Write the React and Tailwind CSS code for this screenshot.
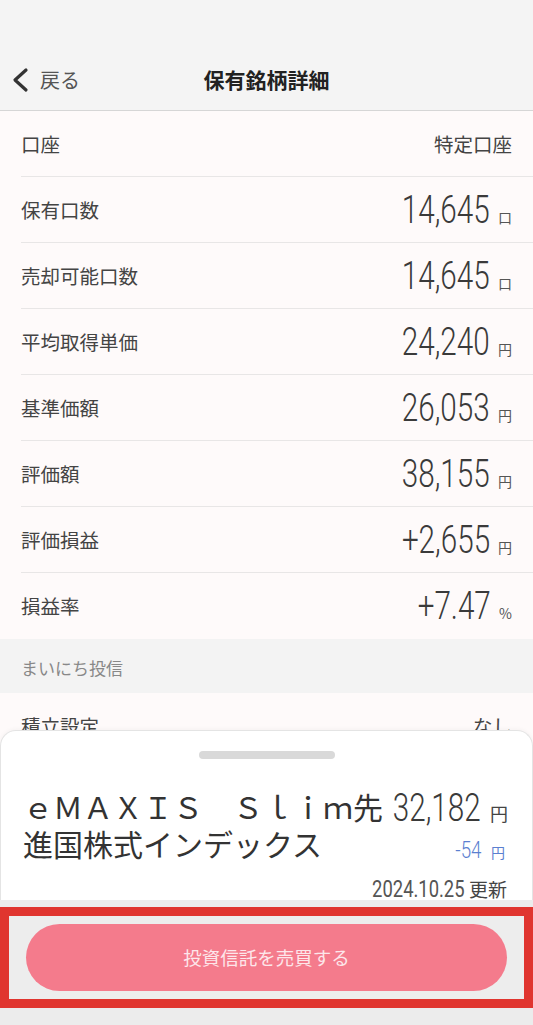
import React from "react";

const jp = { fontFamily: '"Noto Sans CJK JP", "Noto Sans", sans-serif' };
const num = { fontFamily: 'Roboto, "Noto Sans", sans-serif' };

const rows = [
  { label: "口座", text: "特定口座" },
  { label: "保有口数", value: "14,645", unit: "口" },
  { label: "売却可能口数", value: "14,645", unit: "口" },
  { label: "平均取得単価", value: "24,240", unit: "円" },
  { label: "基準価額", value: "26,053", unit: "円" },
  { label: "評価額", value: "38,155", unit: "円" },
  { label: "評価損益", value: "+2,655", unit: "円" },
  { label: "損益率", value: "+7.47", unit: "%", last: true },
];

function Row({ label, text, value, unit, last }) {
  return (
    <div className={`ml-[21px] h-[66px] pr-[21px] flex items-center justify-between ${last ? "" : "border-b border-[#e8e6e6]"}`}>
      <span className="text-[19.5px] text-[#444]">{label}</span>
      {text ? (
        <span className="text-[19.5px] text-[#444]">{text}</span>
      ) : (
        <span className="flex items-baseline">
          <span
            style={num}
            className="inline-block origin-right scale-x-[0.78] text-[38px] font-light leading-[40px] text-[#3a3a3a]"
          >
            {value}
          </span>
          <span className="ml-[8px] text-[14px] text-[#555]">{unit}</span>
        </span>
      )}
    </div>
  );
}

export default function App() {
  return (
    <div style={jp} className="relative h-[1025px] w-[533px] overflow-hidden bg-[#fefafa]">
      {/* header */}
      <div className="h-[111px] bg-[#f4f4f4] border-b border-[#d6d6d6] pt-[50px]">
        <div className="relative h-[60px] flex items-center px-[11px]">
          <svg width="18" height="26" viewBox="0 0 18 26" className="mr-[11px]">
            <path d="M15 3 L4 13 L15 23" fill="none" stroke="#333" strokeWidth="3.2" strokeLinecap="round" strokeLinejoin="round" />
          </svg>
          <span className="text-[20px] text-[#555]">戻る</span>
          <span className="absolute left-0 right-0 text-center text-[21px] font-bold text-[#222] pointer-events-none">
            保有銘柄詳細
          </span>
        </div>
      </div>

      {/* list */}
      <div>
        {rows.map((r) => (
          <Row key={r.label} {...r} />
        ))}
        <div className="h-[54px] bg-[#f3f3f3] flex items-center px-[21px] pt-[4px]">
          <span className="text-[17px] text-[#888]">まいにち投信</span>
        </div>
        <div className="ml-[21px] h-[66px] pr-[21px] flex items-center justify-between border-b border-[#e8e6e6]">
          <span className="text-[19.5px] text-[#444]">積立設定</span>
          <span className="text-[19.5px] text-[#444]">なし</span>
        </div>
      </div>

      {/* bottom sheet + action */}
      <div className="absolute bottom-0 left-0 right-0">
        <div className="h-[170px] bg-white rounded-t-2xl border border-b-0 border-[#e4e4e4] shadow-[0_-1px_4px_rgba(0,0,0,0.04)] pt-[20px]">
          <div className="mx-auto h-[8px] w-[136px] rounded-full bg-[#d9d9d9]" />
          <div className="mt-[29px] flex pl-[22px] pr-[24px]">
            <div className="w-[368px] shrink-0 text-[30px] leading-[37px] text-[#333]">
              ｅＭＡＸＩＳ　Ｓｌｉｍ先進国株式インデックス
            </div>
            <div className="flex-1 min-w-0 flex flex-col items-end whitespace-nowrap">
              <div className="flex items-baseline">
                <span style={num} className="-ml-[26px] inline-block origin-right scale-x-[0.78] text-[38px] font-light leading-[40px] text-[#3a3a3a]">
                  32,182
                </span>
                <span className="ml-[9px] text-[18px] text-[#444]">円</span>
              </div>
              <div className="mt-[8px] mr-[3px] flex items-baseline">
                <span style={num} className="-ml-[8px] inline-block origin-right scale-x-[0.78] text-[24px] font-light leading-[28px] text-[#5b7fd0]">
                  -54
                </span>
                <span className="ml-[9px] text-[14px] text-[#5b7fd0]">円</span>
              </div>
            </div>
          </div>
          <div className="mt-[11px] flex justify-end items-baseline pr-[25px] whitespace-nowrap">
            <span style={num} className="inline-block origin-right scale-x-[0.8] text-[23px] leading-[26px] text-[#555]">
              2024.10.25
            </span>
            <span className="ml-[4px] text-[19px] text-[#444]">更新</span>
          </div>
        </div>
        <div className="h-[125px] bg-[#ececec] pt-[7px]">
          <div className="h-[101px] border-[9px] border-[#e0352f] bg-[#ededed] px-[17px] py-[8px]">
            <button className="h-[67px] w-full rounded-full bg-[#f47b8c] text-[18.5px] text-[#fde6ea]">
              投資信託を売買する
            </button>
          </div>
        </div>
      </div>
    </div>
  );
}
